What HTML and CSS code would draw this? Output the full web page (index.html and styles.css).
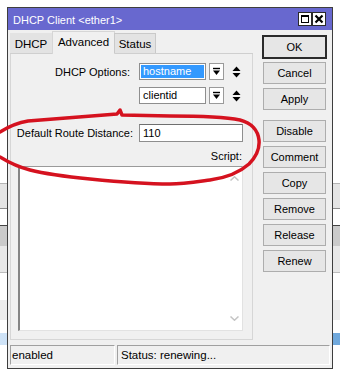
FILE: index.html
```html
<!DOCTYPE html>
<html lang="en">
<head>
    <meta charset="UTF-8">
    <meta name="viewport" content="width=device-width, initial-scale=1.0">
    <title>DHCP Client &lt;ether1&gt;</title>
    <link rel="stylesheet" href="styles.css">
</head>
<body>
    <!-- window behind the dialog, only its edges show -->
    <div class="desk">
        <div class="desk-blank"></div>
        <div class="desk-row desk-head"></div>
        <div class="desk-row desk-white"></div>
        <div class="desk-row desk-bar"></div>
        <div class="desk-row desk-light"></div>
        <div class="desk-row desk-box"></div>
        <div class="desk-row desk-light2"></div>
        <div class="desk-row desk-white2"></div>
        <div class="desk-row desk-sel"></div>
    </div>

    <div class="window">
        <div class="titlebar">
            <span class="title">DHCP Client &lt;ether1&gt;</span>
            <span class="tb-btn">
                <svg width="12" height="12" viewBox="0 0 12 12">
                    <rect x="2.5" y="2.5" width="7" height="7" fill="none" stroke="#000" stroke-width="1"/>
                    <line x1="2" y1="3" x2="10" y2="3" stroke="#000" stroke-width="2"/>
                </svg>
            </span>
            <span class="tb-btn">
                <svg width="12" height="12" viewBox="0 0 12 12">
                    <path d="M2.5 2.5 L9.5 9.5 M9.5 2.5 L2.5 9.5" stroke="#000" stroke-width="2.2"/>
                </svg>
            </span>
        </div>

        <div class="win-body">
            <div class="main">
                <div class="left">
                    <div class="tabs">
                        <div class="tab tab-dhcp">DHCP</div>
                        <div class="tab tab-adv active">Advanced</div>
                        <div class="tab tab-status">Status</div>
                    </div>

                    <div class="panel">
                        <div class="row">
                            <label class="lbl lbl-opt">DHCP Options:</label>
                            <div class="select"><span class="sel-text selected">hostname</span></div>
                            <span class="dd">
                                <svg width="13" height="15" viewBox="0 0 13 15">
                                    <line x1="3" y1="4.5" x2="10" y2="4.5" stroke="#000" stroke-width="1.4"/>
                                    <polygon points="3,6.5 10,6.5 6.5,11" fill="#000"/>
                                </svg>
                            </span>
                            <span class="updown">
                                <svg width="9" height="16" viewBox="0 0 9 16">
                                    <polygon points="0.5,7 8.5,7 4.5,2.5" fill="#000"/>
                                    <polygon points="0.5,9 8.5,9 4.5,13.5" fill="#000"/>
                                </svg>
                            </span>
                        </div>

                        <div class="row row-2">
                            <span class="lbl"></span>
                            <div class="select"><span class="sel-text">clientid</span></div>
                            <span class="dd">
                                <svg width="13" height="15" viewBox="0 0 13 15">
                                    <line x1="3" y1="4.5" x2="10" y2="4.5" stroke="#000" stroke-width="1.4"/>
                                    <polygon points="3,6.5 10,6.5 6.5,11" fill="#000"/>
                                </svg>
                            </span>
                            <span class="updown">
                                <svg width="9" height="16" viewBox="0 0 9 16">
                                    <polygon points="0.5,7 8.5,7 4.5,2.5" fill="#000"/>
                                    <polygon points="0.5,9 8.5,9 4.5,13.5" fill="#000"/>
                                </svg>
                            </span>
                        </div>

                        <div class="row row-3">
                            <label class="lbl">Default Route Distance:</label>
                            <div class="input">110</div>
                        </div>

                        <div class="script-label">Script:</div>
                        <div class="script">
                            <div class="script-text"></div>
                            <div class="scroll">
                                <svg width="9" height="5" viewBox="0 0 9 5">
                                    <path d="M0.5 4.5 L4.5 0.8 L8.5 4.5" fill="none" stroke="#c4c4c4" stroke-width="1.5"/>
                                </svg>
                                <svg width="9" height="5" viewBox="0 0 9 5">
                                    <path d="M0.5 0.5 L4.5 4.2 L8.5 0.5" fill="none" stroke="#c4c4c4" stroke-width="1.5"/>
                                </svg>
                            </div>
                        </div>
                    </div>
                </div>

                <div class="buttons">
                    <div class="btn default">OK</div>
                    <div class="btn">Cancel</div>
                    <div class="btn btn-gap">Apply</div>
                    <div class="btn">Disable</div>
                    <div class="btn">Comment</div>
                    <div class="btn">Copy</div>
                    <div class="btn">Remove</div>
                    <div class="btn">Release</div>
                    <div class="btn">Renew</div>
                </div>
            </div>

            <div class="statusbar">
                <div class="stat stat-a">enabled</div>
                <div class="stat stat-b">Status: renewing...</div>
            </div>
        </div>
    </div>

    <!-- red marker drawn over the screenshot -->
    <svg class="scribble" width="340" height="382" viewBox="0 0 340 382">
        <path d="M0 132 C8 127 16 123 28 121 L117 114 L120 110 L122 115 L170 116 C200 116 225 117 240 120 C252 123 258 131 259 140 C260 150 255 158 249 164 C240 172 225 178 210 180 C195 182 182 184 170 184 C140 184 110 181 90 179 C70 177 50 175 30 170 C18 167 8 162 0 157"
              fill="none" stroke="#d5121f" stroke-width="3.5" stroke-linecap="round" stroke-linejoin="round"/>
    </svg>
</body>
</html>
```

FILE: styles.css
```css
body {
    margin: 0;
    width: 340px;
    height: 382px;
    overflow: hidden;
    background: #fff;
    font-family: "Liberation Sans", Arial, sans-serif;
    font-size: 11px;
    color: #000;
    position: relative;
}

/* background window */
.desk-blank {
    height: 183px;
}
.desk-row {
    box-sizing: border-box;
}
.desk-head {
    height: 25px;
    background: #e4e4e4;
    border-top: 1px solid #b4b4b4;
}
.desk-white {
    height: 17px;
    border-top: 1px solid #8c8c8c;
}
.desk-bar {
    height: 21px;
    background: #cacaca;
    border-top: 1px solid #444;
}
.desk-light {
    height: 26px;
    background: #e8e8e8;
}
.desk-box {
    height: 28px;
    background: #fff;
    border-top: 1px solid #bdbdbd;
}
.desk-light2 {
    height: 20px;
    background: #ececec;
}
.desk-white2 {
    height: 13px;
}
.desk-sel {
    height: 12px;
    background: linear-gradient(to right, #cfe3f7, #6fa8dc);
}

/* dialog */
.window {
    position: absolute;
    left: 7px;
    top: 7px;
    width: 326px;
    height: 362px;
    box-sizing: border-box;
    border: 1px solid #3e3e3e;
    background: #f0f0f0;
    display: flex;
    flex-direction: column;
}
.titlebar {
    height: 22px;
    background: #6868cf;
    display: flex;
    align-items: center;
    padding: 0 6px 0 5px;
}
.title {
    color: #fff;
    flex: 1;
    padding-top: 1px;
}
.tb-btn {
    width: 14px;
    height: 14px;
    box-sizing: border-box;
    border: 1px solid #2a2a2a;
    background: #fff;
    display: flex;
    align-items: center;
    justify-content: center;
}

.win-body {
    flex: 1;
    padding: 1px 0 3px 2px;
    display: flex;
    flex-direction: column;
}
.main {
    display: flex;
    height: 309px;
}
.left {
    width: 243px;
    display: flex;
    flex-direction: column;
}

.tabs {
    height: 23px;
    box-sizing: border-box;
    border-bottom: 1px solid #cfcfcf;
    display: flex;
    align-items: flex-end;
}
.tab {
    height: 20px;
    box-sizing: border-box;
    border: 1px solid #c9c9c9;
    border-bottom: none;
    background: #e3e3e3;
    display: flex;
    align-items: center;
    justify-content: center;
    font-size: 11.5px;
}
.tab-dhcp {
    width: 42px;
    border-color: #e3e3e3;
}
.tab-adv {
    width: 63px;
}
.tab-status {
    width: 42px;
    margin-left: -1px;
}
.tab.active {
    height: 23px;
    margin-bottom: -1px;
    background: #f0f0f0;
    border-color: #d6d6d6;
    align-items: flex-start;
    padding-top: 4px;
}

.panel {
    flex: 1;
    box-sizing: border-box;
    border: 1px solid #d6d6d6;
    border-top: none;
    padding: 9px 9px 6px 7px;
    display: flex;
    flex-direction: column;
}
.row {
    display: flex;
    align-items: center;
    height: 17px;
}
.row-2 {
    margin-top: 7px;
}
.row-3 {
    margin-top: 20px;
}
.lbl {
    width: 115px;
    margin-right: 6px;
    flex: none;
    display: flex;
    justify-content: flex-end;
    white-space: nowrap;
}
.lbl-opt {
    box-sizing: border-box;
    padding-right: 3px;
}
.select {
    width: 67px;
    height: 17px;
    box-sizing: border-box;
    border: 1px solid #8e8e8e;
    background: #fff;
    padding: 1px;
    display: flex;
}
.sel-text {
    flex: 1;
    padding-left: 2px;
    line-height: 13px;
}
.sel-text.selected {
    background: #3399ff;
    color: #fff;
}
.dd {
    width: 15px;
    height: 17px;
    box-sizing: border-box;
    margin-left: 3px;
    border: 1px solid #9a9a9a;
    background: #fff;
    display: flex;
    align-items: center;
    justify-content: center;
}
.updown {
    margin-left: 8px;
    display: flex;
}
.input {
    width: 104px;
    height: 18px;
    box-sizing: border-box;
    border: 1px solid #8e8e8e;
    border-top-color: #6f6f6f;
    background: #fff;
    padding-left: 3px;
    line-height: 16px;
}

.script-label {
    margin-top: 9px;
    height: 13px;
    line-height: 13px;
    text-align: right;
    padding-right: 1px;
}
.script {
    margin-top: 3px;
    height: 165px;
    box-sizing: border-box;
    border: 1px solid #e2e2e2;
    border-left: 2px solid #858585;
    border-top-color: #9a9a9a;
    background: #fff;
    display: flex;
}
.script-text {
    flex: 1;
}
.scroll {
    width: 16px;
    padding: 9px 0 9px;
    display: flex;
    flex-direction: column;
    justify-content: space-between;
    align-items: center;
}

.buttons {
    width: 63px;
    margin-left: 10px;
    padding-top: 5px;
    display: flex;
    flex-direction: column;
}
.btn {
    height: 22px;
    box-sizing: border-box;
    margin-bottom: 4px;
    border: 1px solid #adadad;
    background: #e6e6e6;
    display: flex;
    align-items: center;
    justify-content: center;
}
.btn.default {
    border-color: #2b2b2b;
    box-shadow: 0 0 0 1px #2b2b2b;
}
.btn-gap {
    margin-bottom: 10px;
}

.statusbar {
    margin: 5px 2px 0 0;
    height: 20px;
    display: flex;
    gap: 2px;
}
.stat {
    box-sizing: border-box;
    border: 1px solid #fff;
    border-top-color: #a0a0a0;
    border-left-color: #a0a0a0;
    padding-left: 1px;
    line-height: 18px;
    font-size: 11.5px;
}
.stat-a {
    width: 105px;
}
.stat-b {
    flex: 1;
    padding-left: 3px;
}

.scribble {
    position: absolute;
    left: 0;
    top: 0;
    pointer-events: none;
}
```
